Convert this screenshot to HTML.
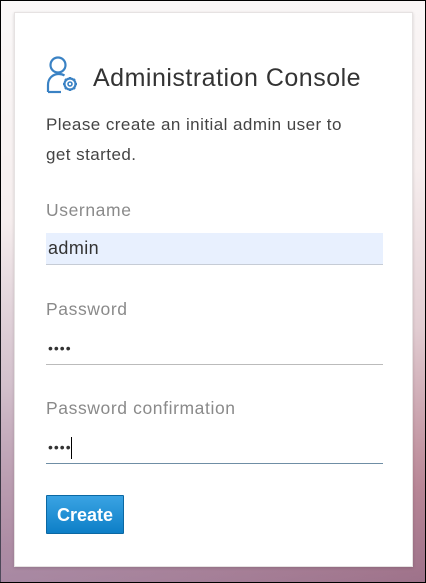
<!DOCTYPE html>
<html><head><style>
html,body{margin:0;padding:0}
body{width:426px;height:583px;box-sizing:border-box;border:1px solid #000;position:relative;overflow:hidden;
background:linear-gradient(172deg,#fbf9f9 0%,#f6eeee 35%,#e2cdd2 60%,#b98594 85%,#9d6a80 100%);
font-family:"Liberation Sans",sans-serif}
.bg2{position:absolute;right:0;bottom:0;width:426px;height:583px;background:linear-gradient(210deg,rgba(200,200,220,0) 55%,rgba(160,150,185,.5) 100%)}
.card{position:absolute;left:13px;top:11px;width:397px;height:553px;background:#fff;border:1px solid #e6e2e2;box-shadow:0 1px 3px rgba(0,0,0,.15)}
.t{position:absolute;left:78px;top:51px;font-size:25px;color:#333;letter-spacing:.5px}
.p{position:absolute;left:31px;top:97px;font-size:17px;line-height:30px;color:#444;width:360px;letter-spacing:.45px}
.l{position:absolute;left:31px;font-size:17.5px;color:#8a8a8a;letter-spacing:.6px}
.in{position:absolute;left:31px;width:337px;height:32px;border-bottom:1px solid #bbb;font-size:18px;color:#333;box-sizing:border-box;padding-left:2px;line-height:31px;letter-spacing:.4px}
.btn{position:absolute;left:31px;top:482px;width:78px;height:39px;background:linear-gradient(#3aa3e3,#0d7fc7);border:1px solid #0b68a3;border-radius:1px;color:#fff;font-weight:bold;font-size:18px;line-height:38px;text-align:center;box-sizing:border-box}
</style></head><body>
<div class="bg2"></div>
<div class="card">
<svg style="position:absolute;left:31px;top:43px" width="34" height="38" viewBox="0 0 34 38" fill="none" stroke="#3a82c4" stroke-width="2.2">
<circle cx="12" cy="9" r="7.5"/>
<path d="M2 36 V29 C2 22 7 18 13 18 C15 18 17 18.5 18.5 19.5"/>
<path d="M2 36 H15"/>
<circle cx="24" cy="28" r="5.5"/>
<circle cx="24" cy="28" r="2" stroke-width="1.6"/>
<path d="M24 21v2M24 33v2M17 28h2M29 28h2M19 23l1.5 1.5M27.5 31.5L29 33M19 33l1.5-1.5M27.5 24.5L29 23" stroke-width="2"/>
</svg>
<div class="t">Administration Console</div>
<div class="p">Please create an initial admin user to<br>get started.</div>
<div class="l" style="top:187px">Username</div>
<div class="in" style="top:220px;background:#e8f0fe;border-color:#c6ccd6">admin</div>
<div class="l" style="top:286px">Password</div>
<div class="in" style="top:320px;font-size:14px;letter-spacing:1px">••••</div>
<div class="l" style="top:385px">Password confirmation</div>
<div class="in" style="top:419px;font-size:14px;letter-spacing:1px;border-color:#6f8ea5">••••<span style="display:inline-block;width:1px;height:22px;background:#000;vertical-align:middle;margin-left:-1px"></span></div>
<div class="btn">Create</div>
</div>
</body></html>
